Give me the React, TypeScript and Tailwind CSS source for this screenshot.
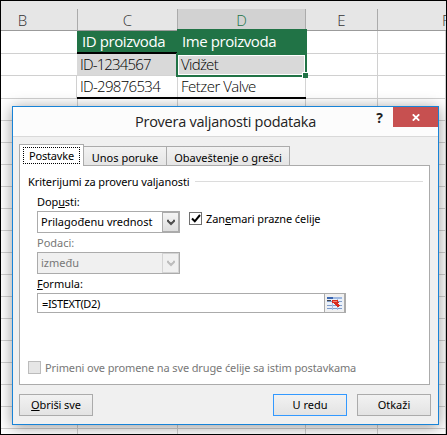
import React from 'react';
import clsx from 'clsx';

const rows = Array.from({ length: 16 }, (_, i) => i);

const Gridline: React.FC<{ className?: string; children?: React.ReactNode }> = ({ className, children }) => (
  <div className={clsx('shrink-0 border-r border-b border-[#d0d0d0]', className)}>{children}</div>
);

const Chevron: React.FC<{ color: string }> = ({ color }) => (
  <svg width="8" height="7" viewBox="0 0 8 7" fill="none">
    <path d="M1 0.8V2L4 5L7 2V0.8" stroke={color} strokeWidth="2" />
  </svg>
);

const Select: React.FC<{ value: string; disabled?: boolean }> = ({ value, disabled }) => (
  <div
    className={clsx(
      'flex h-[22px] w-[143px] border border-[#ababab]',
      disabled ? 'bg-[#f0f0f0] text-[#777]' : 'bg-white text-black'
    )}
  >
    <span className="flex-1 pl-[3px] leading-[20px] whitespace-nowrap">{value}</span>
    <span
      className={clsx(
        'flex w-[17px] items-center justify-center border',
        disabled ? 'border-[#d4d4d4] bg-[#f0f0f0]' : 'border-[#ababab] bg-gradient-to-b from-[#f5f5f5] to-[#dedede]'
      )}
    >
      <Chevron color={disabled ? '#bdbdbd' : '#505050'} />
    </span>
  </div>
);

const Button: React.FC<{ primary?: boolean; className?: string; children: React.ReactNode }> = ({
  primary,
  className,
  children,
}) => (
  <button
    className={clsx(
      'h-[22px] w-[74px] border bg-gradient-to-b from-[#f2f2f2] to-[#e3e3e3] text-center leading-[20px] whitespace-nowrap',
      primary ? 'border-[#3399ff]' : 'border-[#ababab]',
      className
    )}
  >
    {children}
  </button>
);

const RangePicker = () => (
  <svg width="16" height="13" viewBox="0 0 16 13" shapeRendering="crispEdges">
    <rect width="16" height="13" fill="#e9f0f9" />
    <path d="M0 0h6v2H0z" fill="#3b66b0" />
    <path d="M6 0h9v2H6z" fill="#9fb9e2" />
    <path d="M0 4.5h15M0 8.5h15M0 11.5h15" stroke="#7f9bc9" />
    <path d="M5.5 3v10M10.5 2v11" stroke="#a9bede" />
    <path d="M0 3h4v1H0z" fill="#444" />
    <path d="M5 3h6v2h1v1h-1v1h1v1h1v1h-1v1h-2V9H9V8H8V7H7V6H5z" fill="#d92b1c" />
    <path d="M6 4h4v1H6z" fill="#f0816f" />
  </svg>
);

const Sheet = () => (
  <div className="flex h-full flex-col overflow-hidden bg-white font-['Open_Sans',sans-serif] text-[15px] font-light text-black">
    <div className="flex h-[30px] shrink-0 border-b border-[#9b9b9b] bg-[#e6e6e6] pt-2 text-center leading-[23px] text-[#333]">
      <div className="w-[77px] shrink-0 border-r border-[#ababab] pr-[33px]">B</div>
      <div className="w-[100px] shrink-0 border-r border-[#ababab]">C</div>
      <div className="w-[128px] shrink-0 border-r border-[#ababab] bg-[#d2d2d2] text-[#217346]">D</div>
      <div className="w-[72px] shrink-0 border-r border-[#ababab]">E</div>
      <div className="w-[68px] shrink-0 pl-[64px] text-left">F</div>
    </div>

    <div className="flex h-[23px] shrink-0">
      <Gridline className="w-[76px] border-r-0" />
      <div className="w-[100px] shrink-0 border-b-2 border-black bg-[#217346] pl-[5px] font-normal leading-[21px] whitespace-nowrap text-white">
        <span className="tracking-[-0.42px]">ID proizvoda</span>
      </div>
      <div className="-mt-[2px] w-[130px] shrink-0 bg-[#217346] pt-[2px] pl-[5px] font-normal leading-[21px] whitespace-nowrap text-white">
        <span className="tracking-[-0.42px]">Ime proizvoda</span>
      </div>
      <Gridline className="w-[71px]" />
      <Gridline className="w-[68px]" />
    </div>

    <div className="flex h-[22px] shrink-0">
      <Gridline className="w-[76px] border-r-0" />
      <div className="w-[99px] shrink-0 border-b border-[#d4d4d4] bg-[#d9d9d9] pl-[3px] leading-[21px] tracking-[-0.85px] whitespace-nowrap">
        ID-1234567
      </div>
      <div className="relative z-10 -mt-px h-[24px] w-[131px] shrink-0 border-2 border-[#217346] bg-[#d9d9d9] pl-[3px] leading-[19px] tracking-[-0.7px] shadow-[inset_0_0_0_1px_white]">
        Vidžet
        <span className="absolute -right-[3px] -bottom-[3px] h-[6px] w-[6px] border-t border-l border-white bg-[#217346]" />
      </div>
      <Gridline className="w-[71px]" />
      <Gridline className="w-[68px]" />
    </div>

    <div className="flex h-[23px] shrink-0 whitespace-nowrap">
      <Gridline className="w-[76px]" />
      <div className="flex h-[23px] shrink-0 border-b-2 border-black leading-[21px]">
        <div className="w-[101px] border-r border-[#d4d4d4] pl-[3px] tracking-[-0.7px]">ID-29876534</div>
        <div className="w-[128px] border-r border-[#d4d4d4] pl-[3px] tracking-[-0.5px]">Fetzer Valve</div>
      </div>
      <Gridline className="w-[72px]" />
      <Gridline className="w-[68px]" />
    </div>

    {rows.map((row) => (
      <div key={row} className="flex h-[22px] shrink-0">
        <Gridline className="w-[77px]" />
        <Gridline className="w-[100px]" />
        <Gridline className="w-[128px]" />
        <Gridline className="w-[72px]" />
        <Gridline className="w-[68px]" />
      </div>
    ))}
  </div>
);

const Dialog = () => (
  <div className="absolute top-[105px] left-[11px] z-20 flex h-[319px] w-[427px] flex-col border border-[#1883d7] bg-[#f0f0f0] font-['Noto_Sans',sans-serif] text-[11px] text-black shadow-[0_2px_14px_rgba(0,0,0,0.4)]">
    <div className="relative h-[30px] shrink-0 border-b border-[#d9d9d9] bg-[#fcfcfc] text-center font-['Open_Sans',sans-serif] text-[14.5px] leading-[30px] tracking-[-0.25px] text-[#222]">
      Provera valjanosti podataka
      <div className="absolute top-0 right-0 flex h-[20px]">
        <span className="w-[27px] text-center text-[14px] leading-[21px] font-bold">?</span>
        <span className="flex w-[45px] items-center justify-center bg-[#c75050]">
          <svg width="8" height="7" viewBox="0 0 8 7">
            <path d="M0.8 0.3L7.2 6.7M7.2 0.3L0.8 6.7" stroke="#fff" strokeWidth="1.8" />
          </svg>
        </span>
      </div>
    </div>

    <div className="flex h-[28px] shrink-0 items-end pl-[6px] whitespace-nowrap">
      <div className="z-10 -mb-px h-[22px] w-[65px] border border-b-0 border-[#ababab] bg-white px-[3px] pt-[2px]">
        <div className="h-[17px] border border-dotted border-black text-center leading-[16px] tracking-[-0.2px]">Postavke</div>
      </div>
      <div className="h-[19px] w-[83px] border-t border-r border-[#ababab] bg-gradient-to-b from-[#f2f2f2] to-[#e5e5e5] text-center leading-[21px]">
        Unos poruke
      </div>
      <div className="h-[19px] w-[123px] border-t border-r border-[#ababab] bg-gradient-to-b from-[#f2f2f2] to-[#e5e5e5] text-center leading-[21px]">
        Obaveštenje o grešci
      </div>
    </div>

    <div className="mr-[8px] ml-[6px] flex h-[220px] shrink-0 flex-col border border-[#ababab] bg-white pt-[8px] pl-[8px] whitespace-nowrap">
      <div className="flex h-[16px] items-center pr-[6px]">
        <span className="tracking-[-0.08px]">Kriterijumi za proveru valjanosti</span>
        <span className="mb-px ml-[5px] h-px flex-1 bg-[#dcdcdc]" />
      </div>

      <div className="flex flex-col pl-[9px]">
        <label className="mt-[3px] h-[18px] leading-[18px] tracking-[-0.1px]">
          Dop<u>u</u>sti:
        </label>
        <div className="flex">
          <Select value="Prilagođenu vrednost" />
          <div className="mt-px ml-[9px] flex h-[13px] w-[13px] items-center justify-center border border-[#707070]">
            <svg width="10" height="9" viewBox="0 0 10 9">
              <path d="M1 4.5L3.8 7.3L9 1" stroke="#000" strokeWidth="2" fill="none" />
            </svg>
          </div>
          <span className="ml-[4px] h-[15px] leading-[15px] tracking-[-0.1px]">
            Zan<u>e</u>mari prazne ćelije
          </span>
        </div>
        <label className="h-[19px] leading-[20px] text-[#777]">Podaci:</label>
        <Select value="između" disabled />
        <label className="h-[19px] leading-[20px]">
          <u>F</u>ormula:
        </label>
        <div className="flex h-[20px] w-[309px] border border-[#ababab]">
          <span className="flex-1 pl-[4px] leading-[20px] tracking-[-0.35px]">=ISTEXT(D2)</span>
          <span className="flex w-[21px] items-center justify-center border-r border-l border-[#ababab] bg-[#f0f0f0]">
            <RangePicker />
          </span>
        </div>
      </div>

      <div className="mt-[48px] flex h-[13px] text-[#777]">
        <span className="h-[13px] w-[13px] border border-[#bcbcbc] bg-[#e6e6e6]" />
        <span className="ml-[4px] leading-[14px] tracking-[-0.12px]">
          Primeni ove promene na sve druge ćelije sa istim postavkama
        </span>
      </div>
    </div>

    <div className="flex pt-[9px] pl-[6px]">
      <Button className="tracking-[-0.1px]">
        <u>O</u>briši sve
      </Button>
      <Button primary className="ml-[180px]">
        U redu
      </Button>
      <Button className="ml-[10px]">Otkaži</Button>
    </div>
  </div>
);

const App: React.FC = () => (
  <div className="relative h-[435px] w-[447px] overflow-hidden border border-black">
    <Sheet />
    <Dialog />
  </div>
);

export default App;
